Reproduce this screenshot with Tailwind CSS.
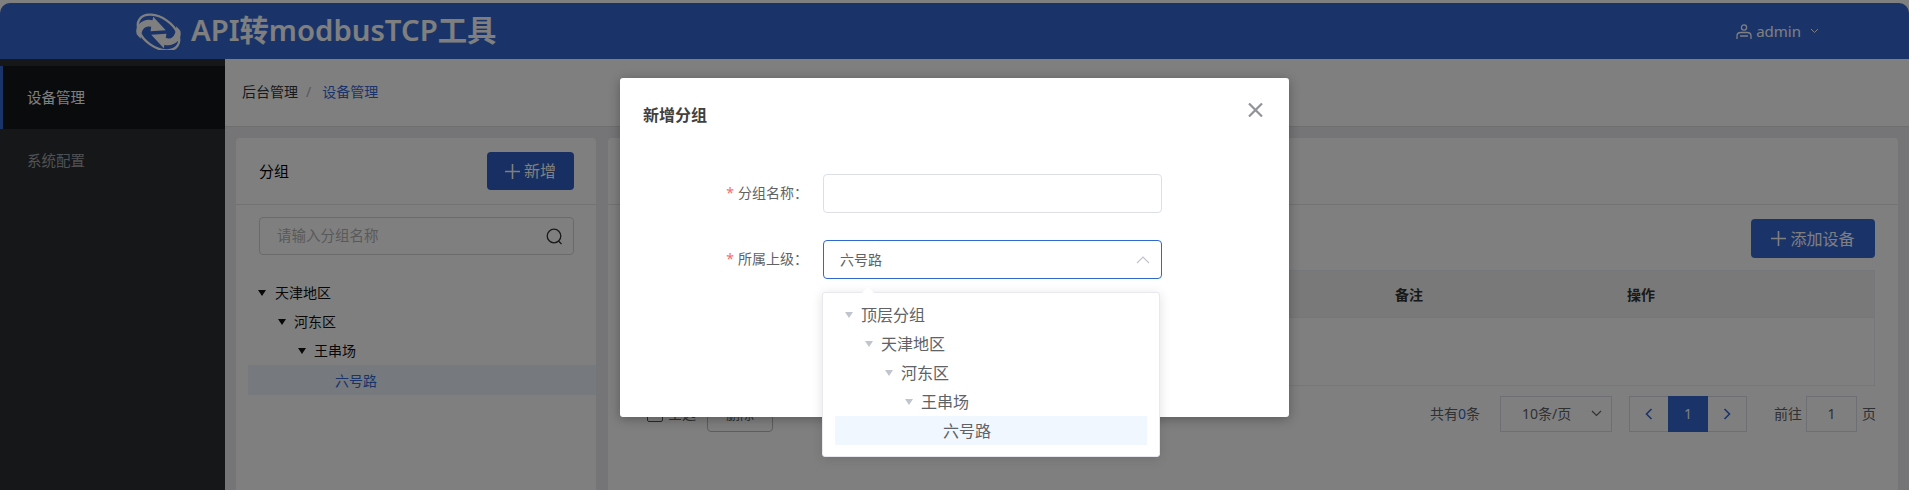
<!DOCTYPE html>
<html lang="zh">

<head>
    <meta charset="UTF-8">
    <title>API转modbusTCP工具</title>
    <script src="https://cdn.jsdelivr.net/npm/@tailwindcss/browser@4"></script>
</head>

<body class="bg-white h-[490px] overflow-hidden relative font-['Noto_Sans','Noto_Sans_CJK_SC',sans-serif] text-[14px] text-[#606266]">

    <div class="mt-[3px] h-[487px] rounded-t-[10px] overflow-hidden flex flex-col">
        <!-- 顶部 -->
        <header class="h-[56px] shrink-0 bg-[#3468d4] flex items-center text-white">
            <div class="ml-[134px] flex items-center">
                <svg width="49" height="38" viewBox="20 15 148 115" fill="none">
                    <ellipse cx="94" cy="77" rx="70" ry="44" transform="rotate(35 94 77)" stroke="white" stroke-width="7"/>
                    <path d="M28 82C20 54 50 32 76 40L78 29L116 70L70 73L72 60C55 55 42 64 40 96Z" fill="white"/>
                    <path d="M160 72C168 100 138 122 112 114L110 125L72 84L118 81L116 94C133 99 146 90 148 58Z" fill="white"/>
                </svg>
                <span class="ml-[8px] text-[29.3px] font-semibold leading-none">API转modbusTCP工具</span>
            </div>
            <div class="ml-auto mr-[90px] flex items-center">
                <svg width="16" height="17" viewBox="0 0 16 17" fill="none" stroke="white" stroke-width="1.3">
                    <circle cx="8" cy="4.5" r="2.6"/>
                    <path d="M1 16V13C1 10.5 3 9.5 5 9.5H11C13 9.5 15 10.5 15 13V16"/>
                    <path d="M4 13H12"/>
                </svg>
                <span class="ml-[4px] text-[15px]">admin</span>
                <svg class="ml-[9px]" width="9" height="6" viewBox="0 0 9 6" fill="none" stroke="white"><path d="M1 1L4.5 4.5L8 1"/></svg>
            </div>
        </header>

        <div class="flex flex-1 min-h-0">
            <!-- 侧边栏 -->
            <aside class="w-[225px] shrink-0 bg-[#2c2e32] pt-[7px] text-[14.5px]">
                <div class="h-[63px] bg-[#14161a] border-l-[3px] border-[#3468d4] pl-[24px] flex items-center text-white">设备管理</div>
                <div class="h-[63px] pl-[27px] flex items-center text-[#a0a3a8]">系统配置</div>
            </aside>

            <main class="flex-1 min-w-0 bg-[#eaebee] flex flex-col">
                <!-- 面包屑 -->
                <div class="h-[68px] shrink-0 bg-white border-b border-[#dedede] flex items-center pl-[17px] pb-[2px]">
                    <span class="text-[#333]">后台管理</span>
                    <span class="ml-[8px] mr-[11px] text-[#b0b0b0]">/</span>
                    <span class="text-[#3468d4]">设备管理</span>
                </div>

                <div class="flex gap-[12px] pt-[11px] pl-[11px] pr-[11px] flex-1 min-h-0">
                    <!-- 分组 -->
                    <section class="w-[360px] shrink-0 bg-white rounded-t-[4px]">
                        <div class="h-[67px] border-b border-[#e6e6e6] flex items-center justify-between pl-[23px] pr-[22px]">
                            <span class="text-[15px] text-black">分组</span>
                            <button class="w-[87px] h-[38px] rounded-[4px] bg-[#2f5fc4] text-white text-[16px] flex items-center justify-center">
                                <svg width="15" height="15" viewBox="0 0 15 15" stroke="white" stroke-width="1.6"><path d="M7.5 0V15M0 7.5H15"/></svg>
                                <span class="ml-[4px]">新增</span>
                            </button>
                        </div>
                        <div class="px-[23px] pr-[22px] pt-[12px]">
                            <div class="h-[38px] border border-[#d4d4d4] rounded-[4px] flex items-center justify-between pl-[17px] pr-[10px]">
                                <span class="text-[#b3b3b3] text-[14.5px]">请输入分组名称</span>
                                <svg width="17" height="17" viewBox="0 0 17 17" fill="none" stroke="#333" stroke-width="1.3"><circle cx="8" cy="8" r="6.8"/><path d="M12.5 13L15.5 16"/></svg>
                            </div>
                        </div>
                        <div class="mt-[23px] pl-[12px] text-[14px] text-[#111]">
                            <div class="h-[29px] flex items-center pl-[10px]"><span class="w-0 h-0 border-x-[4.5px] border-x-transparent border-t-[6px] border-t-[#111]"></span><span class="ml-[9px]">天津地区</span></div>
                            <div class="h-[29px] flex items-center pl-[30px]"><span class="w-0 h-0 border-x-[4.5px] border-x-transparent border-t-[6px] border-t-[#111]"></span><span class="ml-[8px]">河东区</span></div>
                            <div class="h-[29px] flex items-center pl-[50px]"><span class="w-0 h-0 border-x-[4.5px] border-x-transparent border-t-[6px] border-t-[#111]"></span><span class="ml-[8px]">王串场</span></div>
                            <div class="h-[30px] flex items-center pl-[87px] bg-[#edf3fd] text-[#3468d4]">六号路</div>
                        </div>
                    </section>

                    <!-- 设备列表 -->
                    <section class="flex-1 min-w-0 bg-white rounded-t-[4px]">
                        <div class="h-[67px] border-b border-[#e6e6e6]"></div>
                        <div class="px-[23px] pt-[14px]">
                            <div class="flex justify-end">
                                <button class="w-[124px] h-[39px] rounded-[4px] bg-[#3468d4] text-white text-[16px] flex items-center justify-center">
                                    <svg width="15" height="15" viewBox="0 0 15 15" stroke="white" stroke-width="1.6"><path d="M7.5 0V15M0 7.5H15"/></svg>
                                    <span class="ml-[4px]">添加设备</span>
                                </button>
                            </div>
                            <!-- 表格 -->
                            <div class="mt-[12px] border border-[#ebeef5] h-[116px]">
                                <div class="h-[47px] bg-[#f3f3f3] border-b border-[#ebeef5] flex items-center font-bold text-[#333] text-[14px]">
                                    <span class="ml-[763px] w-[232px]">备注</span>
                                    <span>操作</span>
                                </div>
                            </div>
                            <!-- 分页 -->
                            <div class="mt-[9px] flex items-start text-[14px] text-[#606266]">
                                <div class="flex items-center h-[37px] ml-[16px]">
                                    <span class="w-[16px] h-[16px] border border-[#555] rounded-[2px]"></span>
                                    <span class="ml-[5px]">全选</span>
                                    <span class="ml-[11px] w-[66px] h-[37px] border border-[#bbb] rounded-[4px] flex items-center justify-center">删除</span>
                                </div>
                                <div class="ml-auto -mr-px flex items-center h-[37px]">
                                    <span>共有<span class="text-[#3468d4]">0</span>条</span>
                                    <div class="ml-[20px] w-[112px] h-[36px] border border-[#dcdfe6] flex items-center pl-[21px] pr-[9px] justify-between">
                                        <span>10条/页</span>
                                        <svg width="11" height="7" viewBox="0 0 11 7" fill="none" stroke="#606266" stroke-width="1.2"><path d="M1 1L5.5 5.5L10 1"/></svg>
                                    </div>
                                    <div class="ml-[17px] flex h-[36px] border border-[#dcdfe6]">
                                        <span class="w-[38px] flex items-center justify-center"><svg width="8" height="12" viewBox="0 0 8 12" fill="none" stroke="#3468d4" stroke-width="1.6"><path d="M6.5 1L1.5 6L6.5 11"/></svg></span>
                                        <span class="w-[40px] bg-[#3468d4] text-white flex items-center justify-center -my-px">1</span>
                                        <span class="w-[38px] flex items-center justify-center"><svg width="8" height="12" viewBox="0 0 8 12" fill="none" stroke="#3468d4" stroke-width="1.6"><path d="M1.5 1L6.5 6L1.5 11"/></svg></span>
                                    </div>
                                    <span class="ml-[27px]">前往</span>
                                    <span class="ml-[4px] w-[51px] h-[36px] border border-[#dcdfe6] flex items-center justify-center">1</span>
                                    <span class="ml-[5px]">页</span>
                                </div>
                            </div>
                        </div>
                    </section>
                </div>
            </main>
        </div>
    </div>

    <!-- 遮罩 -->
    <div class="absolute inset-0 bg-black/50"></div>

    <!-- 弹窗 -->
    <div class="absolute left-[620px] top-[78px] w-[669px] h-[339px] bg-white rounded-[3px] shadow-[0_2px_12px_rgba(0,0,0,0.3)]">
        <div class="h-[74px] pl-[23px] pr-[26px] flex justify-between">
            <span class="mt-[26px] text-[16px] font-bold text-[#404040] leading-[22px]">新增分组</span>
            <svg class="mt-[25px]" width="15" height="14" viewBox="0 0 15 14" fill="none" stroke="#909399" stroke-width="2.2"><path d="M1 0.5L14 13.5M14 0.5L1 13.5"/></svg>
        </div>
        <div class="mt-[22px] flex items-center">
            <label class="w-[203px] text-right pr-[15px] -mt-[2px]"><span class="text-[#f56c6c] mr-[4px]">*</span>分组名称：</label>
            <div class="w-[339px] h-[39px] border border-[#dcdfe6] rounded-[4px]"></div>
        </div>
        <div class="mt-[27px] flex items-center">
            <label class="w-[203px] text-right pr-[15px] -mt-[2px]"><span class="text-[#f56c6c] mr-[4px]">*</span>所属上级：</label>
            <div class="w-[339px] h-[39px] border border-[#3068d0] rounded-[4px] flex items-center justify-between pl-[16px] pr-[11px]">
                <span>六号路</span>
                <svg width="14" height="8" viewBox="0 0 14 8" fill="none" stroke="#c0c4cc" stroke-width="1.1"><path d="M1 7L7 1L13 7"/></svg>
            </div>
        </div>
        <div class="absolute left-[202px] top-[274px] w-[60px] h-[41px] border border-[#dcdfe6] rounded-[4px]"></div>

        <!-- 下拉树 -->
        <div class="absolute left-[202px] top-[214px] w-[338px] h-[165px] bg-white rounded-[3px] border border-[#e8e8ee] shadow-[0_2px_12px_rgba(0,0,0,0.12)] pt-[7px] px-[12px] text-[16px]">
            <span class="absolute left-[39px] -top-[6px] w-0 h-0 border-x-[6px] border-x-transparent border-b-[6px] border-b-white"></span>
            <div class="h-[29px] flex items-center pl-[10px]"><span class="w-0 h-0 border-x-[4px] border-x-transparent border-t-[6px] border-t-[#c0c4cc]"></span><span class="ml-[8px]">顶层分组</span></div>
            <div class="h-[29px] flex items-center pl-[30px]"><span class="w-0 h-0 border-x-[4px] border-x-transparent border-t-[6px] border-t-[#c0c4cc]"></span><span class="ml-[8px]">天津地区</span></div>
            <div class="h-[29px] flex items-center pl-[50px]"><span class="w-0 h-0 border-x-[4px] border-x-transparent border-t-[6px] border-t-[#c0c4cc]"></span><span class="ml-[8px]">河东区</span></div>
            <div class="h-[29px] flex items-center pl-[70px]"><span class="w-0 h-0 border-x-[4px] border-x-transparent border-t-[6px] border-t-[#c0c4cc]"></span><span class="ml-[8px]">王串场</span></div>
            <div class="h-[29px] flex items-center pl-[108px] bg-[#f0f7ff]">六号路</div>
        </div>
    </div>

</body>

</html>
